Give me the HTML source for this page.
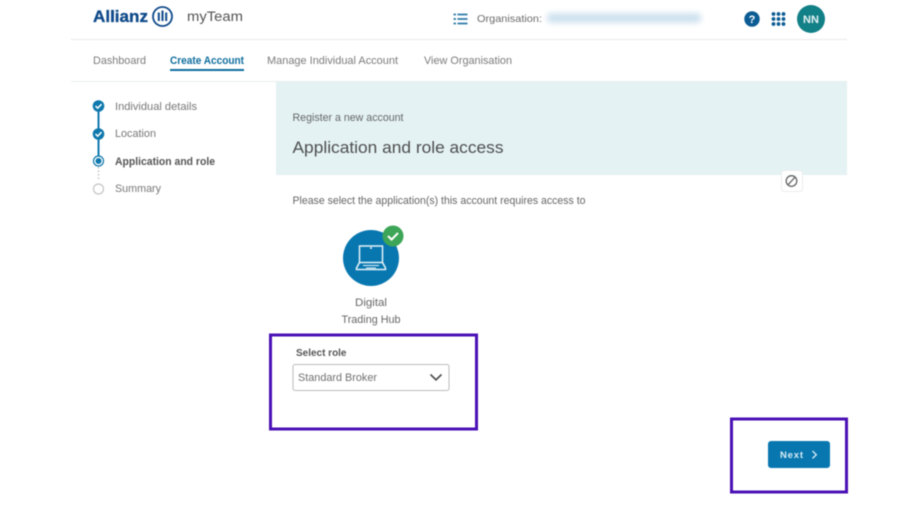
<!DOCTYPE html>
<html><head><meta charset="utf-8"><title>myTeam</title>
<style>
html,body{margin:0;padding:0;background:#fff;width:923px;height:516px;overflow:hidden}
svg{display:block;filter:blur(.45px)}
text{font-family:"Liberation Sans",sans-serif;font-size:11px;fill:#6b6b6b}
.b{font-weight:bold}
</style></head><body>
<svg width="923" height="516" viewBox="0 0 923 516" xmlns="http://www.w3.org/2000/svg">
<rect width="923" height="516" fill="#fff"/>
<!-- header -->
<text x="93" y="22" class="b" style="font-size:17px;fill:#0f4a8a;stroke:#0f4a8a;stroke-width:.35" textLength="55" lengthAdjust="spacingAndGlyphs">Allianz</text>
<circle cx="162.500" cy="16.500" r="9.500" fill="none" stroke="#0f4a8a" stroke-width="1.800"/>
<path d="M157.800 12.500v8.500h2v-8.500zM161.500 10.500v10.500h2V10.500zM165.200 12.500v8.500h2v-8.500z" fill="#0f4a8a"/>
<text x="187" y="21" style="font-size:13.500px;fill:#555" textLength="56" lengthAdjust="spacingAndGlyphs">myTeam</text>
<path d="M453.500 14.500h2.500M453.500 19h2.500M453.500 23.500h2.500" stroke="#2d7aa8" stroke-width="1.800"/>
<path d="M457.500 14.500h10M457.500 19h10M457.500 23.500h10" stroke="#2d7aa8" stroke-width="1.800"/>
<text x="477" y="22" style="font-size:10.500px" textLength="65" lengthAdjust="spacingAndGlyphs">Organisation:</text>
<rect x="547" y="13" width="154" height="10" rx="4" fill="#cfe2f0" style="filter:blur(3px)"/>
<circle cx="752" cy="19" r="7.700" fill="#0b5c94"/>
<text x="752" y="23" text-anchor="middle" class="b" style="font-size:11px;fill:#fff">?</text>
<g fill="#0b5c94">
<circle cx="773.500" cy="14" r="1.900"/><circle cx="778.500" cy="14" r="1.900"/><circle cx="783.500" cy="14" r="1.900"/>
<circle cx="773.500" cy="19" r="1.900"/><circle cx="778.500" cy="19" r="1.900"/><circle cx="783.500" cy="19" r="1.900"/>
<circle cx="773.500" cy="24" r="1.900"/><circle cx="778.500" cy="24" r="1.900"/><circle cx="783.500" cy="24" r="1.900"/>
</g>
<circle cx="811" cy="19" r="14" fill="#128087"/>
<text x="811" y="23" text-anchor="middle" class="b" style="font-size:11px;fill:#e6f3f4">NN</text>
<rect x="71" y="39" width="776" height="1" fill="#e8e8e8"/>
<!-- nav -->
<text x="93" y="64" textLength="53" lengthAdjust="spacingAndGlyphs" style="fill:#7b7b7b">Dashboard</text>
<text x="170" y="64" class="b" style="fill:#0f6d9e" textLength="74" lengthAdjust="spacingAndGlyphs">Create Account</text>
<rect x="170" y="69" width="74" height="2" fill="#0f6d9e"/>
<text x="267" y="64" textLength="131" lengthAdjust="spacingAndGlyphs" style="fill:#7b7b7b">Manage Individual Account</text>
<text x="424" y="64" textLength="88" lengthAdjust="spacingAndGlyphs" style="fill:#7b7b7b">View Organisation</text>
<rect x="71" y="81" width="776" height="1" fill="#e8eeee"/>
<!-- stepper -->
<path d="M98.500 106v55" stroke="#0f78ad" stroke-width="2"/>
<path d="M98.500 167v14" stroke="#c4c4c4" stroke-width="1.500" stroke-dasharray="1.500 2"/>
<circle cx="98.500" cy="106" r="5.800" fill="#0f78ad"/>
<path d="M95.500 106l2.200 2.200 3.800-4" fill="none" stroke="#fff" stroke-width="1.500"/>
<circle cx="98.500" cy="134" r="5.800" fill="#0f78ad"/>
<path d="M95.500 134l2.200 2.200 3.800-4" fill="none" stroke="#fff" stroke-width="1.500"/>
<circle cx="98.500" cy="161" r="5" fill="#fff" stroke="#0f78ad" stroke-width="1.200"/>
<circle cx="98.500" cy="161" r="3" fill="#0f78ad"/>
<circle cx="98.500" cy="189" r="5" fill="#fff" stroke="#c4c4c4" stroke-width="1.200"/>
<text x="115" y="110" textLength="82" lengthAdjust="spacingAndGlyphs" style="fill:#777">Individual details</text>
<text x="115" y="137" textLength="41" lengthAdjust="spacingAndGlyphs" style="fill:#777">Location</text>
<text x="115" y="165" class="b" style="fill:#555" textLength="100" lengthAdjust="spacingAndGlyphs">Application and role</text>
<text x="115" y="192" textLength="46" lengthAdjust="spacingAndGlyphs" style="fill:#777">Summary</text>
<!-- banner -->
<rect x="276" y="82" width="571" height="93" fill="#e4f2f4"/>
<text x="292.500" y="121" textLength="111" lengthAdjust="spacingAndGlyphs" style="fill:#666">Register a new account</text>
<text x="292.500" y="153" textLength="211" lengthAdjust="spacingAndGlyphs" style="font-size:17px;fill:#4e4e4e">Application and role access</text>
<text x="292.500" y="204" textLength="293" lengthAdjust="spacingAndGlyphs" style="fill:#666">Please select the application(s) this account requires access to</text>
<!-- small button -->
<rect x="781.500" y="170.500" width="21" height="21" rx="3" fill="#fff" stroke="#ececec"/>
<circle cx="791.500" cy="181" r="5.300" fill="none" stroke="#666" stroke-width="1.300"/>
<path d="M788 184.800l7-7.600" stroke="#666" stroke-width="1.300"/>
<!-- app icon -->
<circle cx="371" cy="258" r="28" fill="#0877b0"/>
<g fill="none" stroke="#e4f2f8" stroke-width="1.500">
<path d="M359.500 246h23v16.500h-23z"/>
<path d="M359.500 262.500l-3 5.500v1.500h29v-1.500l-3-5.500"/>
</g>
<path d="M363 265.500h16M366 268h10" stroke="#e4f2f8" stroke-width="1"/>
<circle cx="371" cy="248" r="1" fill="#e4f2f8"/>
<circle cx="393" cy="236" r="10.500" fill="#3da557"/>
<path d="M388 236l3.600 3.600 6.400-6.600" fill="none" stroke="#fff" stroke-width="2"/>
<text x="371" y="306" text-anchor="middle" textLength="32" lengthAdjust="spacingAndGlyphs" style="fill:#666">Digital</text>
<text x="371" y="323" text-anchor="middle" textLength="59" lengthAdjust="spacingAndGlyphs" style="fill:#666">Trading Hub</text>
<!-- select highlight -->
<rect x="270.500" y="335" width="206" height="94" fill="none" stroke="#4a10b5" stroke-width="3"/>
<text x="296" y="356" class="b" style="font-size:10.500px;fill:#555" textLength="50.500" lengthAdjust="spacingAndGlyphs">Select role</text>
<rect x="293" y="364.500" width="156" height="26" rx="2" fill="#fff" stroke="#bdbdbd"/>
<text x="298" y="381" textLength="79" lengthAdjust="spacingAndGlyphs" style="fill:#707070">Standard Broker</text>
<path d="M430.500 374.500l5.500 5.300 5.500-5.300" fill="none" stroke="#4e4e4e" stroke-width="1.700"/>
<!-- next highlight -->
<rect x="731.500" y="419" width="115" height="73" fill="none" stroke="#4a10b5" stroke-width="3"/>
<rect x="768" y="441" width="62" height="27" rx="3" fill="#0877b0"/>
<text x="780" y="458" class="b" style="font-size:9.500px;fill:#dcedf5" textLength="23" lengthAdjust="spacing">Next</text>
<path d="M812.500 451l3.800 3.700-3.800 3.700" fill="none" stroke="#dcedf5" stroke-width="1.300"/>
</svg>
</body></html>
